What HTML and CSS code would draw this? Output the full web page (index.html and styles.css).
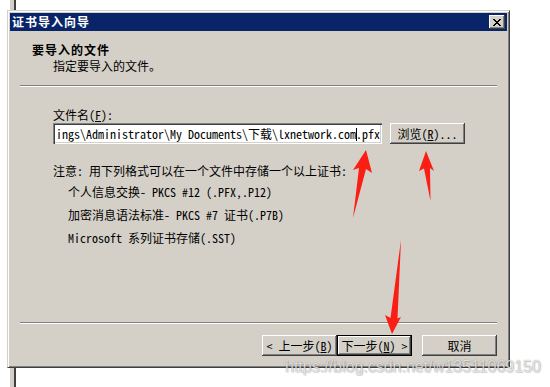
FILE: index.html
```html
<!DOCTYPE html>
<html lang="zh-CN">
<head>
<meta charset="utf-8">
<title>证书导入向导</title>
<link rel="stylesheet" href="styles.css">
</head>
<body>
<div class="behind"></div>
<div class="dialog">
  <div class="titlebar">
    <span class="title">证书导入向导</span>
    <button class="close" aria-label="关闭">
      <svg width="8" height="7" viewBox="0 0 8 7" shape-rendering="crispEdges"><path d="M0 0h2v1h-2z M6 0h2v1h-2z M1 1h2v1h-2z M5 1h2v1h-2z M2 2h4v1h-4z M3 3h2v1h-2z M2 4h4v1h-4z M1 5h2v1h-2z M5 5h2v1h-2z M0 6h2v1h-2z M6 6h2v1h-2z" fill="#000"/></svg>
    </button>
  </div>
  <div class="header">
    <div class="h-title">要导入的文件</div>
    <div class="h-sub">指定要导入的文件。</div>
  </div>
  <div class="sep"></div>
  <div class="main">
    <div class="label">文件名(<u>F</u>):</div>
    <div class="file-row">
      <div class="input">ings\Administrator\My Documents\下载\lxnetwork.com<span class="caret"></span>.pfx</div>
      <button class="btn">浏览(<u>R</u>)...</button>
    </div>
    <div class="note">注意: 用下列格式可以在一个文件中存储一个以上证书:</div>
    <ul class="formats">
      <li>个人信息交换- PKCS #12 (.PFX,.P12)</li>
      <li>加密消息语法标准- PKCS #7 证书(.P7B)</li>
      <li>Microsoft 系列证书存储(.SST)</li>
    </ul>
  </div>
  <div class="footer">
    <div class="sep"></div>
    <div class="buttons">
      <button class="btn">&lt; 上一步(<u>B</u>)</button>
      <button class="btn default">下一步(<u>N</u>) &gt;</button>
      <button class="btn cancel">取消</button>
    </div>
  </div>
</div>
<svg class="arrows" width="550" height="387" viewBox="0 0 550 387">
  <polygon points="366,150 372,173 366,169 353,218 359,168 353,170" fill="#fa1e14"/>
  <polygon points="426,151 434,171 430,168 430.5,201 424,168.5 419,171" fill="#fa1e14"/>
  <polygon points="392,334 385,315 390.5,318 401,240 397.5,318.5 401,317" fill="#fa1e14"/>
</svg>
<div class="watermark">https://blog.csdn.net/w13511069150</div>
</body>
</html>
```
FILE: styles.css
```css
* { box-sizing: border-box; }
body {
  margin: 0;
  width: 550px;
  height: 387px;
  background: #fff;
  position: relative;
  overflow: hidden;
  font-family: "Noto Sans Mono CJK SC", "Noto Sans CJK SC", monospace;
  font-size: 12px;
  color: #000;
}
.behind {
  position: absolute;
  left: 9px;
  top: 0;
  width: 7px;
  height: 387px;
  background: #d4d0c8;
  border-left: 1px solid #fff;
  border-right: 2px solid #404040;
}
.dialog {
  position: absolute;
  left: 7px;
  top: 10px;
  width: 503px;
  height: 358px;
  background: #d4d0c8;
  border: 1px solid;
  border-color: #d4d0c8 #404040 #404040 #d4d0c8;
  box-shadow: inset 1px 1px #fff, inset -1px -1px #808080;
  padding: 2px;
  display: flex;
  flex-direction: column;
}
.titlebar {
  height: 18px;
  background: #0a246a;
  display: flex;
  align-items: center;
  justify-content: space-between;
  padding: 0 2px;
  color: #fff;
}
.title {
  font-family: "Noto Sans CJK SC", sans-serif;
  font-weight: bold;
  letter-spacing: 1px;
  line-height: 14px;
}
.close {
  width: 16px;
  height: 14px;
  padding: 0;
  border: none;
  background: #d4d0c8;
  box-shadow: inset -1px -1px #404040, inset 1px 1px #fff, inset -2px -2px #808080;
  display: flex;
  align-items: center;
  justify-content: center;
}
.header {
  padding: 12px 0 0 22px;
  line-height: 14px;
}
.h-title {
  font-family: "Noto Sans CJK SC", sans-serif;
  font-weight: bold;
  letter-spacing: 1px;
}
.h-sub {
  margin-top: 2px;
  padding-left: 21px;
}
.sep {
  height: 2px;
  margin: 12px 10px 0 10px;
  border-top: 1px solid #808080;
  border-bottom: 1px solid #fff;
}
.footer .sep { margin-top: 0; }
.main {
  flex: 1;
  padding: 21px 0 0 43px;
  line-height: 14px;
}
.file-row {
  display: flex;
  gap: 8px;
  margin-top: 1px;
}
.input {
  width: 329px;
  height: 21px;
  background: #fff;
  box-shadow: inset 1px 1px #808080, inset 2px 2px #404040, inset -1px -1px #fff, inset -2px -2px #d4d0c8;
  padding: 0 2px 0 3px;
  line-height: 21px;
  white-space: nowrap;
  overflow: hidden;
}
.caret {
  display: inline-block;
  width: 1px;
  height: 13px;
  background: #000;
  vertical-align: -2px;
  margin-right: -1px;
}
.btn {
  width: 75px;
  height: 21px;
  padding: 0;
  border: none;
  background: #d4d0c8;
  font-family: inherit;
  font-size: 12px;
  color: #000;
  box-shadow: inset -1px -1px #404040, inset 1px 1px #fff, inset -2px -2px #808080;
}
.btn.default {
  border: 1px solid #000;
  box-shadow: inset -1px -1px #404040, inset 1px 1px #fff, inset -2px -2px #808080;
}
.btn.cancel { margin-left: 10px; }
.note { margin-top: 20px; }
.formats {
  list-style: none;
  margin: 7px 0 0 15px;
  padding: 0;
}
.formats li + li { margin-top: 9px; }
.buttons {
  display: flex;
  justify-content: flex-end;
  margin: 11px 10px 9px 0;
}
.arrows {
  position: absolute;
  left: 0;
  top: 0;
  pointer-events: none;
}
.watermark {
  position: absolute;
  left: 285px;
  top: 357px;
  font-family: "Liberation Sans", Arial, sans-serif;
  font-size: 16px;
  line-height: 20px;
  color: rgba(255, 255, 255, 0.75);
  text-shadow: 0 0 1px rgba(0, 0, 0, 0.45), 1px 1px 1px rgba(0, 0, 0, 0.15);
  white-space: nowrap;
}
```
